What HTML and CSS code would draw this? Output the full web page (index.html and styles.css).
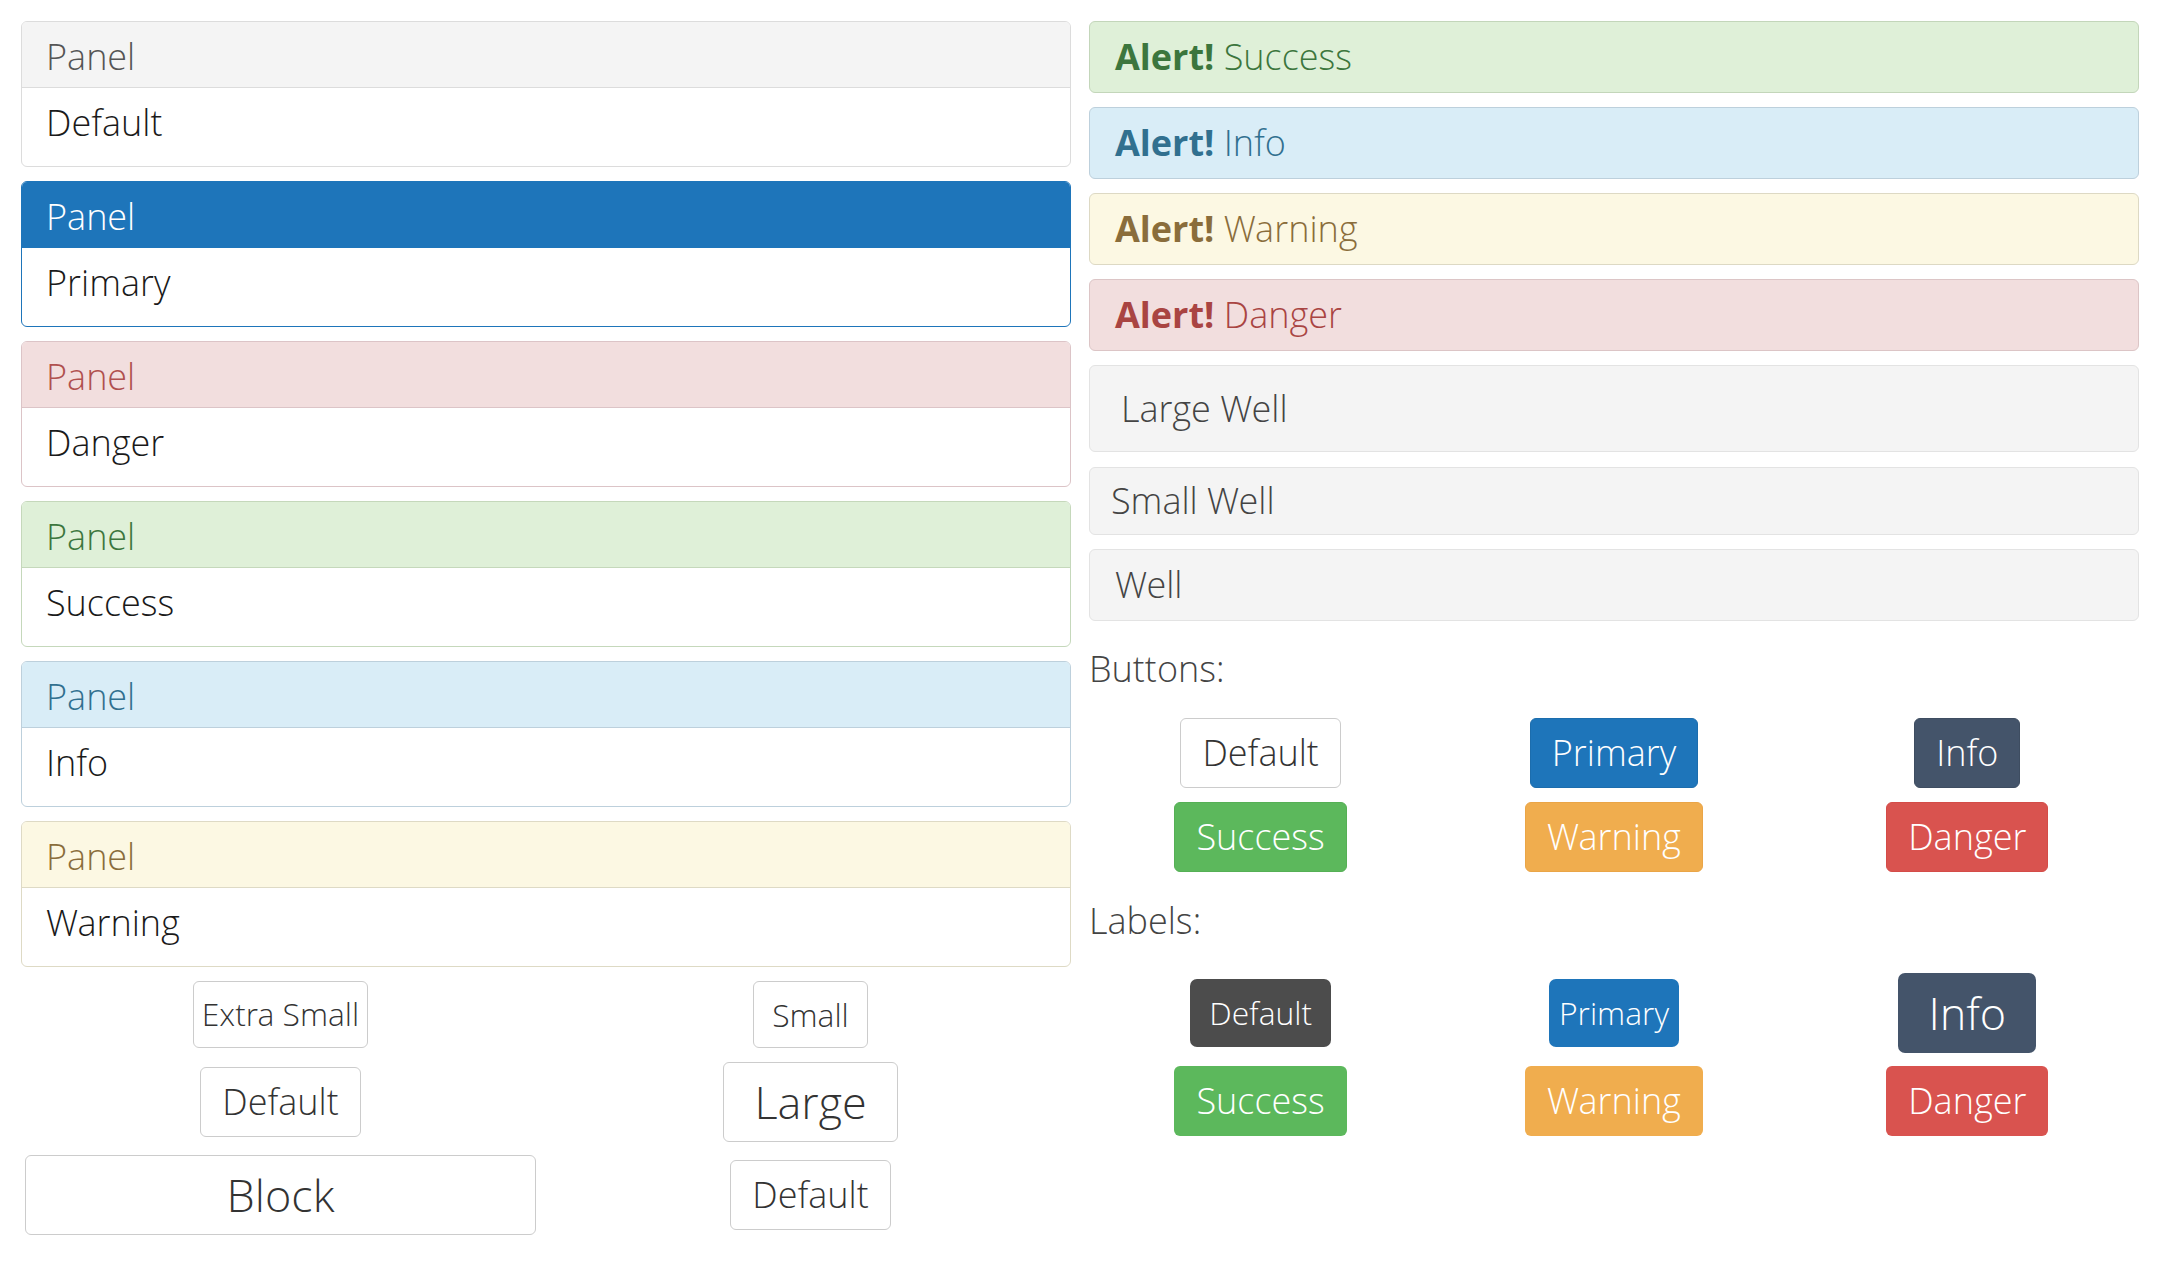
FILE: index.html
```html
<!DOCTYPE html>
<html lang="en">
<head>
<meta charset="utf-8">
<title>Bootstrap components</title>
<link rel="stylesheet" href="styles.css">
</head>
<body>
<div class="page">
  <div class="col">
    <div class="panel panel-default">
      <div class="panel-heading">Panel</div>
      <div class="panel-body">Default</div>
    </div>
    <div class="panel panel-primary">
      <div class="panel-heading">Panel</div>
      <div class="panel-body">Primary</div>
    </div>
    <div class="panel panel-danger">
      <div class="panel-heading">Panel</div>
      <div class="panel-body">Danger</div>
    </div>
    <div class="panel panel-success">
      <div class="panel-heading">Panel</div>
      <div class="panel-body">Success</div>
    </div>
    <div class="panel panel-info">
      <div class="panel-heading">Panel</div>
      <div class="panel-body">Info</div>
    </div>
    <div class="panel panel-warning">
      <div class="panel-heading">Panel</div>
      <div class="panel-body">Warning</div>
    </div>

    <div class="btn-sizes">
      <div class="cell"><button type="button" class="btn btn-default btn-xs">Extra Small</button></div>
      <div class="cell"><button type="button" class="btn btn-default btn-sm">Small</button></div>
      <div class="cell"><button type="button" class="btn btn-default">Default</button></div>
      <div class="cell"><button type="button" class="btn btn-default btn-lg">Large</button></div>
      <div class="cell cell-block"><button type="button" class="btn btn-default btn-lg btn-block">Block</button></div>
      <div class="cell"><button type="button" class="btn btn-default">Default</button></div>
    </div>
  </div>

  <div class="col">
    <div class="alert alert-success"><strong>Alert!</strong> Success</div>
    <div class="alert alert-info"><strong>Alert!</strong> Info</div>
    <div class="alert alert-warning"><strong>Alert!</strong> Warning</div>
    <div class="alert alert-danger"><strong>Alert!</strong> Danger</div>

    <div class="well well-lg">Large Well</div>
    <div class="well well-sm">Small Well</div>
    <div class="well well-md">Well</div>

    <div class="section-title">Buttons:</div>
    <div class="grid3">
      <button type="button" class="btn btn-default">Default</button>
      <button type="button" class="btn btn-primary">Primary</button>
      <button type="button" class="btn btn-info">Info</button>
      <button type="button" class="btn btn-success">Success</button>
      <button type="button" class="btn btn-warning">Warning</button>
      <button type="button" class="btn btn-danger">Danger</button>
    </div>

    <div class="section-title section-title-labels">Labels:</div>
    <div class="grid3 labels">
      <span class="label label-default">Default</span>
      <span class="label label-primary">Primary</span>
      <span class="label label-info-lg">Info</span>
      <span class="label label-md label-success">Success</span>
      <span class="label label-md label-warning">Warning</span>
      <span class="label label-md label-danger">Danger</span>
    </div>
  </div>
</div>
</body>
</html>
```

FILE: styles.css
```css
* { box-sizing: border-box; }

html, body {
  margin: 0;
  padding: 0;
  background: #ffffff;
}

body {
  font-family: "Open Sans Light", "Open Sans", "Noto Sans", "Liberation Sans", sans-serif;
  font-weight: 300;
  font-size: 36px;
  color: #1e1e1e;
}

.page {
  display: grid;
  grid-template-columns: 1050px 1050px;
  column-gap: 18px;
  padding: 21px 0 0 21px;
}

/* Panels */
.panel {
  border: 1px solid #dcdcdc;
  border-radius: 6px;
  margin-bottom: 14px;
  overflow: hidden;
  background: #fff;
}
.panel-heading {
  padding: 11px 24px 6px;
  line-height: 48px;
  border-bottom: 1px solid #dcdcdc;
  background: #f4f4f4;
  color: #555;
}
.panel-body {
  padding: 11px 24px 19px;
  line-height: 48px;
  color: #1a1a1a;
}
.panel-primary { border-color: #1e75ba; }
.panel-primary .panel-heading { background: #1e75ba; border-color: #1e75ba; color: #fff; }
.panel-danger { border-color: #dcc4c7; }
.panel-danger .panel-heading { background: #f2dede; border-color: #dcc4c7; color: #b0504e; }
.panel-success { border-color: #c5d8bb; }
.panel-success .panel-heading { background: #dff0d8; border-color: #c5d8bb; color: #3c763d; }
.panel-info { border-color: #bdd0dc; }
.panel-info .panel-heading { background: #d9edf7; border-color: #bdd0dc; color: #31708f; }
.panel-warning { border-color: #dedac5; }
.panel-warning .panel-heading { background: #fcf8e3; border-color: #dedac5; color: #8a6d3b; }

/* Size buttons area */
.btn-sizes {
  display: grid;
  grid-template-columns: 511px 511px;
  grid-template-rows: 67px 80px 80px;
  column-gap: 19px;
  row-gap: 13.5px;
  margin-left: 4px;
  justify-items: center;
  align-items: center;
}
.cell { display: flex; justify-content: center; }
.cell-block { width: 100%; }

/* Buttons */
.btn {
  display: inline-block;
  font-family: inherit;
  font-weight: 300;
  font-size: 36px;
  line-height: 68px;
  padding: 0 21px;
  margin: 0;
  border: 1px solid #cccccc;
  border-radius: 6px;
  background: #ffffff;
  color: #333333;
  text-align: center;
  white-space: nowrap;
}
.btn-xs { font-size: 31.8px; line-height: 64.5px; padding: 0 8px; }
.btn-sm { font-size: 31.8px; line-height: 65px; padding: 0 18px; }
.btn-lg { font-size: 45px; line-height: 78px; padding: 0 30px; }
.btn-block { width: 100%; }

.btn-primary { background: #1e75ba; border-color: #1c6dad; color: #fff; }
.btn-info { background: #44546a; border-color: #3e4d61; color: #fff; }
.btn-success { background: #5cb85c; border-color: #55b055; color: #fff; }
.btn-warning { background: #f0ad4e; border-color: #eaa547; color: #fff; }
.btn-danger { background: #d9534f; border-color: #d44c48; color: #fff; }

/* Alerts */
.alert {
  height: 72px;
  border: 1px solid;
  border-radius: 6px;
  padding: 0 25px;
  line-height: 70px;
  margin-bottom: 14px;
}
.alert strong {
  font-family: "Open Sans", "Noto Sans", sans-serif;
  font-weight: 700;
}
.alert-success { background: #dff0d8; border-color: #c3d6ba; color: #3c763d; }
.alert-info { background: #d9edf7; border-color: #bdd0dc; color: #31708f; }
.alert-warning { background: #fcf8e3; border-color: #ddd9c4; color: #8a6d3b; }
.alert-danger { background: #f2dede; border-color: #dcc5c6; color: #a94442; }

/* Wells */
.well {
  display: flex;
  align-items: center;
  background: #f4f4f4;
  border: 1px solid #e3e3e3;
  border-radius: 6px;
  color: #444;
}
.well-lg { height: 87px; padding: 0 31px; margin-bottom: 14.5px; }
.well-sm { height: 68px; padding: 0 21px; margin-bottom: 14px; }
.well-md { height: 72px; padding: 0 25px; }

/* Section titles */
.section-title {
  margin: 24px 0 25.5px;
  line-height: 48px;
  color: #444;
}
.section-title-labels { margin: 25px 0 28px; }

.grid3 {
  display: grid;
  grid-template-columns: repeat(3, 1fr);
  margin: 0 -5px;
  row-gap: 14px;
  justify-items: center;
  align-items: center;
}
.labels { row-gap: 13px; }

/* Labels */
.label {
  display: inline-block;
  color: #fff;
  border-radius: 7px;
  font-size: 31.8px;
  line-height: 68px;
  white-space: nowrap;
}
.label-default { background: #4c4c4c; padding: 0 19px; }
.label-primary { background: #1e75ba; padding: 0 10px; }
.label-info-lg { background: #44546a; font-size: 45px; line-height: 80px; padding: 0 30px; }
.label-md { font-size: 36px; line-height: 70px; padding: 0 22px; border-radius: 6px; }
.label-success { background: #5cb85c; }
.label-warning { background: #f0ad4e; }
.label-danger { background: #d9534f; }
```
